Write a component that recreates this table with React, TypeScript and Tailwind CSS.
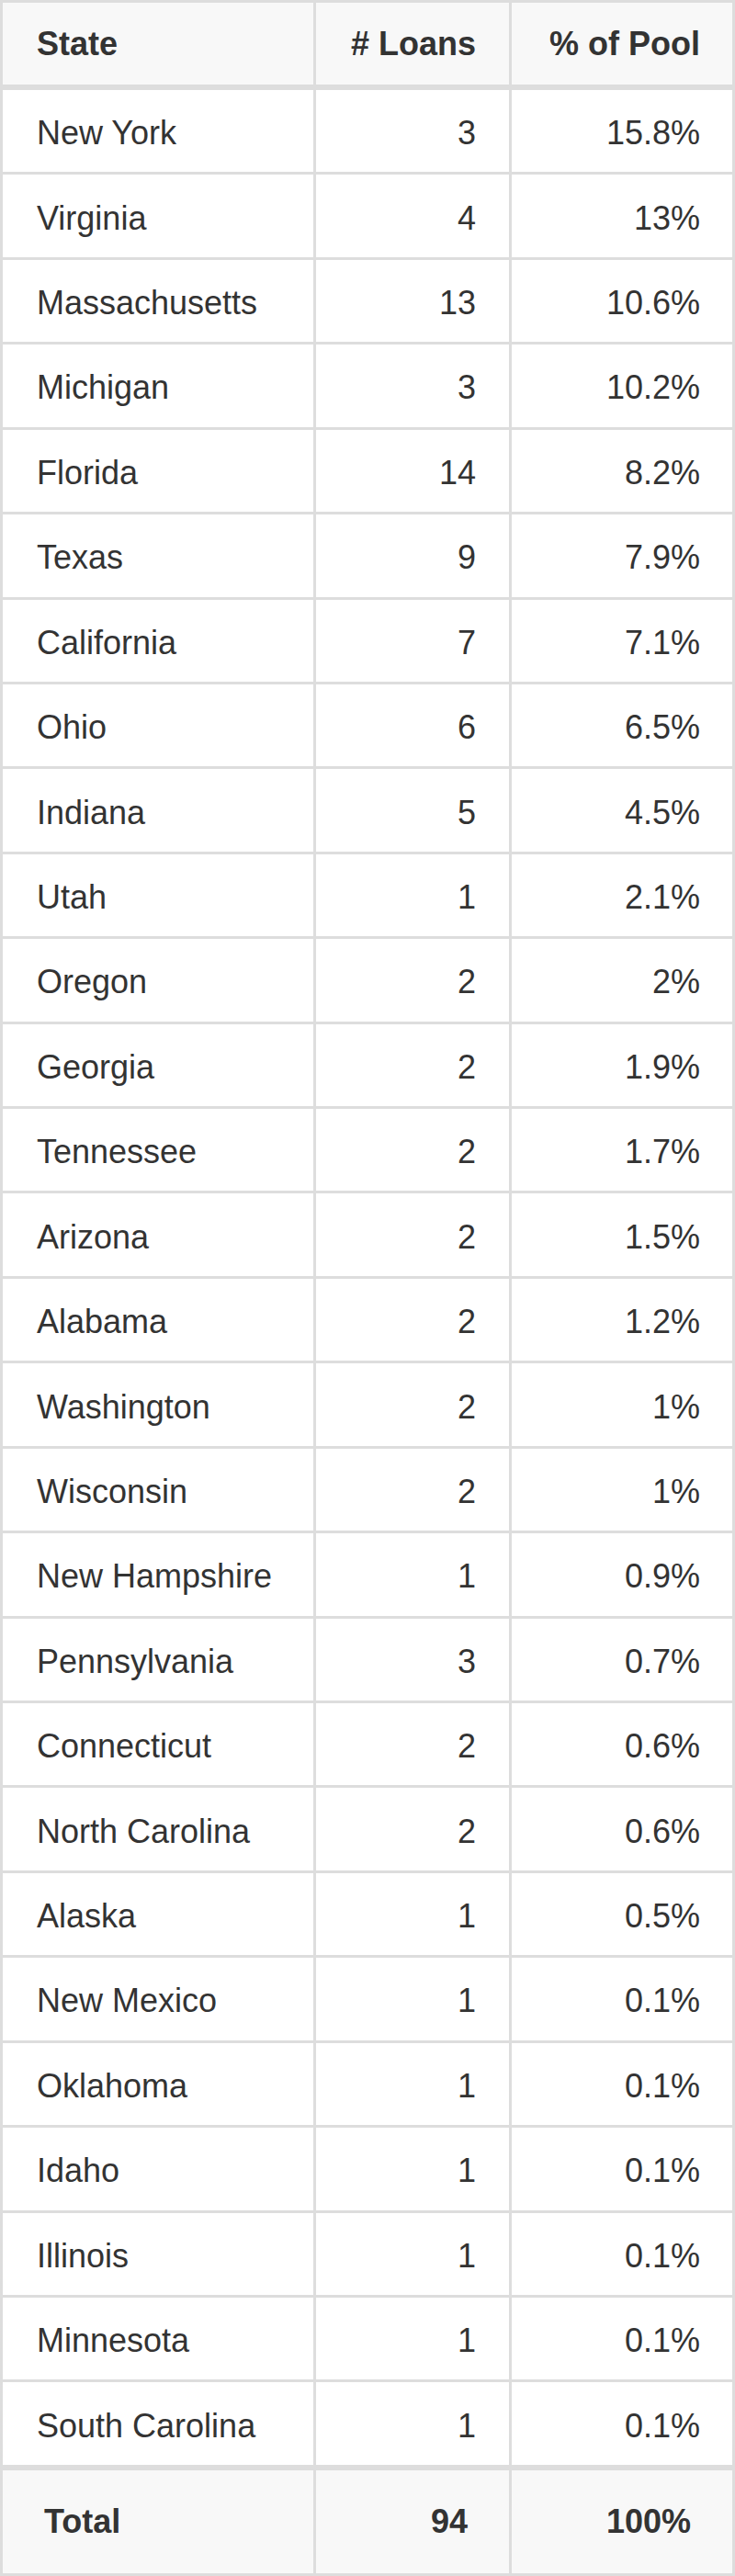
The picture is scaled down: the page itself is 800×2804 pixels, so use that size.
import React from "react";

const rows: [string, string, string][] = [
  ["New York", "3", "15.8%"],
  ["Virginia", "4", "13%"],
  ["Massachusetts", "13", "10.6%"],
  ["Michigan", "3", "10.2%"],
  ["Florida", "14", "8.2%"],
  ["Texas", "9", "7.9%"],
  ["California", "7", "7.1%"],
  ["Ohio", "6", "6.5%"],
  ["Indiana", "5", "4.5%"],
  ["Utah", "1", "2.1%"],
  ["Oregon", "2", "2%"],
  ["Georgia", "2", "1.9%"],
  ["Tennessee", "2", "1.7%"],
  ["Arizona", "2", "1.5%"],
  ["Alabama", "2", "1.2%"],
  ["Washington", "2", "1%"],
  ["Wisconsin", "2", "1%"],
  ["New Hampshire", "1", "0.9%"],
  ["Pennsylvania", "3", "0.7%"],
  ["Connecticut", "2", "0.6%"],
  ["North Carolina", "2", "0.6%"],
  ["Alaska", "1", "0.5%"],
  ["New Mexico", "1", "0.1%"],
  ["Oklahoma", "1", "0.1%"],
  ["Idaho", "1", "0.1%"],
  ["Illinois", "1", "0.1%"],
  ["Minnesota", "1", "0.1%"],
  ["South Carolina", "1", "0.1%"],
];

export default function App() {
  return (
    <div
      className="w-[800px] bg-white text-[#333333] text-[36px] leading-[41px]"
      style={{ fontFamily: '"Liberation Sans", Arial, Helvetica, sans-serif' }}
    >
      <div className="border-[3px] border-[#dddddd]">
        {/* Header */}
        <div className="grid grid-cols-[341px_213px_240px] h-[95px] bg-[#f8f8f8] border-b-[6px] border-[#dddddd] font-bold">
          <div className="flex items-center pl-[37px] border-r-[3px] border-[#dddddd]">State</div>
          <div className="flex items-center justify-end pr-[36px] border-r-[3px] border-[#dddddd]"># Loans</div>
          <div className="flex items-center justify-end pr-[35px]">% of Pool</div>
        </div>
        {/* Body */}
        {rows.map(([state, loans, pct], i) => (
          <div
            key={state}
            className={
              "grid grid-cols-[341px_213px_240px] bg-white border-[#dddddd] " +
              (i < rows.length - 1 ? "h-[92.43px] border-b-[3px]" : "h-[89.43px]")
            }
          >
            <div className="flex items-center pl-[37px] pt-[4px] border-r-[3px] border-[#dddddd]">{state}</div>
            <div className="flex items-center justify-end pr-[36px] pt-[4px] border-r-[3px] border-[#dddddd]">{loans}</div>
            <div className="flex items-center justify-end pr-[35px] pt-[4px]">{pct}</div>
          </div>
        ))}
        {/* Total */}
        <div className="grid grid-cols-[341px_213px_240px] h-[118px] bg-[#f8f8f8] border-t-[6px] border-[#dddddd] font-bold">
          <div className="flex items-center pl-[45px] border-r-[3px] border-[#dddddd]">Total</div>
          <div className="flex items-center justify-end pr-[45px] border-r-[3px] border-[#dddddd]">94</div>
          <div className="flex items-center justify-end pr-[45px]">100%</div>
        </div>
      </div>
    </div>
  );
}
